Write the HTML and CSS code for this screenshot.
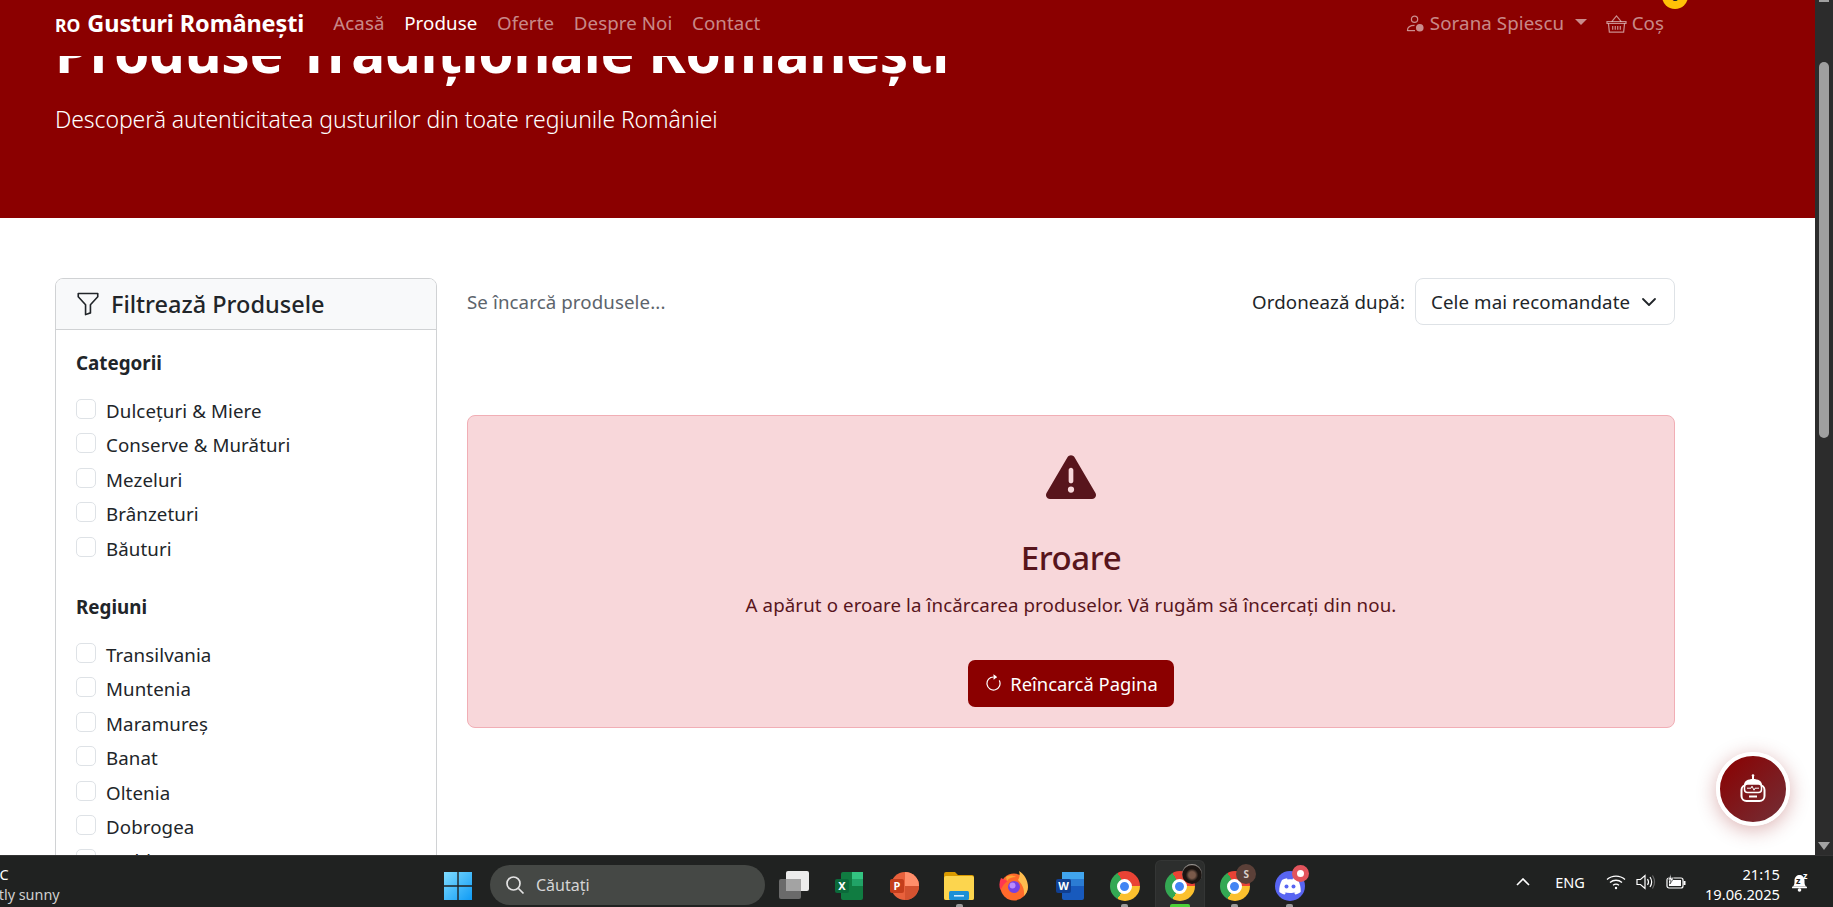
FILE: index.html
```html
<!DOCTYPE html>
<html lang="ro">
<head>
<meta charset="utf-8">
<title>Produse Tradiționale Românești</title>
<link rel="stylesheet" href="styles.css">
</head>
<body>
<div class="viewport">
  <div class="page">
    <nav class="navbar">
      <a class="brand"><span class="brand-ro">RO</span><span>Gusturi Românești</span></a>
      <a class="nav-link">Acasă</a>
      <a class="nav-link active">Produse</a>
      <a class="nav-link">Oferte</a>
      <a class="nav-link">Despre Noi</a>
      <a class="nav-link">Contact</a>
      <div class="nav-right">
        <a class="nav-link user">
          <svg class="nav-icon" viewBox="0 0 20 20" fill="none" stroke="currentColor" stroke-width="1.3"><circle cx="9" cy="5.5" r="3.3"/><path d="M1.500 17.500c0-3.500 3-5.500 7.500-5.500"/><path d="M1.500 17.500h8"/><circle cx="14.500" cy="14.500" r="4" fill="currentColor" stroke="none"/></svg>
          Sorana Spiescu<span class="caret"></span>
        </a>
        <a class="nav-link cart">
          <svg class="nav-icon basket" viewBox="0 0 22 20" fill="none" stroke="currentColor" stroke-width="1.300"><path d="M6 8l5-6 5 6"/><path d="M1 8h20v2H1z"/><path d="M2.500 10l1 9h15l1-9"/><path d="M7 12.500v4M9.700 12.500v4M12.300 12.500v4M15 12.500v4"/></svg>
          Coș
        </a>
      </div>
      <span class="cart-badge">0</span>
    </nav>

    <header class="hero">
      <div class="hero-clip"><h1 class="hero-title">Produse Tradiționale Românești</h1></div>
      <p class="hero-lead">Descoperă autenticitatea gusturilor din toate regiunile României</p>
    </header>

    <main class="content">
      <aside class="filters">
        <div class="filters-head">
          <svg class="funnel" viewBox="0 0 16 16" fill="currentColor"><path d="M1.5 1.5A.5.5 0 0 1 2 1h12a.5.5 0 0 1 .5.5v2a.5.5 0 0 1-.128.334L10 8.692V13.5a.5.5 0 0 1-.342.474l-3 1A.5.5 0 0 1 6 14.5V8.692L1.628 3.834A.5.5 0 0 1 1.5 3.5zm1 .5v1.308l4.372 4.858A.5.5 0 0 1 7 8.5v5.306l2-.666V8.5a.5.5 0 0 1 .128-.334L13.5 3.308V2z"/></svg>
          <h2>Filtrează Produsele</h2>
        </div>
        <div class="filters-body">
          <h3>Categorii</h3>
          <ul class="checks">
            <li><span class="box"></span>Dulcețuri &amp; Miere</li>
            <li><span class="box"></span>Conserve &amp; Murături</li>
            <li><span class="box"></span>Mezeluri</li>
            <li><span class="box"></span>Brânzeturi</li>
            <li><span class="box"></span>Băuturi</li>
          </ul>
          <h3 class="second">Regiuni</h3>
          <ul class="checks">
            <li><span class="box"></span>Transilvania</li>
            <li><span class="box"></span>Muntenia</li>
            <li><span class="box"></span>Maramureș</li>
            <li><span class="box"></span>Banat</li>
            <li><span class="box"></span>Oltenia</li>
            <li><span class="box"></span>Dobrogea</li>
            <li><span class="box"></span>Moldova</li>
          </ul>
        </div>
      </aside>

      <section class="results">
        <div class="toolbar">
          <span class="loading">Se încarcă produsele...</span>
          <div class="sort">
            <span>Ordonează după:</span>
            <div class="select">Cele mai recomandate
              <svg class="chev" viewBox="0 0 16 16" fill="none" stroke="currentColor" stroke-width="1.800" stroke-linecap="round" stroke-linejoin="round"><path d="M2 5l6 6 6-6"/></svg>
            </div>
          </div>
        </div>
        <div class="alert">
          <svg class="warn" viewBox="0 0 512 512" fill="currentColor"><path d="M256 32c14.2 0 27.3 7.5 34.5 19.8l216 368c7.3 12.4 7.3 27.7 .2 40.1S486.3 480 472 480H40c-14.3 0-27.6-7.7-34.7-20.1s-7-27.8 .2-40.1l216-368C228.7 39.5 241.8 32 256 32zm0 128c-13.3 0-24 10.7-24 24V296c0 13.3 10.7 24 24 24s24-10.7 24-24V184c0-13.3-10.7-24-24-24zm32 224a32 32 0 1 0 -64 0 32 32 0 1 0 64 0z"/></svg>
          <h4>Eroare</h4>
          <p>A apărut o eroare la încărcarea produselor. Vă rugăm să încercați din nou.</p>
          <button class="reload">
            <svg class="reload-icon" viewBox="0 0 16 16" fill="currentColor"><path d="M8 3a5 5 0 1 0 4.546 2.914.5.5 0 0 1 .908-.417A6 6 0 1 1 8 2z"/><path d="M8 4.466V.534a.25.25 0 0 1 .41-.192l2.36 1.966c.12.1.12.284 0 .384L8.41 4.658A.25.25 0 0 1 8 4.466"/></svg>
            Reîncarcă Pagina
          </button>
        </div>
      </section>
    </main>

    <button class="fab" aria-label="Asistent">
      <svg viewBox="0 0 32 32" fill="none" stroke="#fff" stroke-width="2"><path d="M16 2v4"/><circle cx="16" cy="2.500" r="1.300" fill="#fff" stroke="none"/><path d="M7 12c0-4 4-6 9-6s9 2 9 6v2H7z" fill="#fff" stroke="none"/><rect x="4.500" y="12" width="23" height="16" rx="5"/><rect x="7.500" y="11" width="17" height="8.500" rx="3" fill="#7d1a1f" stroke="#fff" stroke-width="1.500"/><path d="M10 15.200h4l1-2 2 4 1-2h4" stroke="#fff" stroke-width="1"/><path d="M12 23.500h8" stroke-width="2"/></svg>
    </button>
  </div>

  <div class="scrollbar">
    <span class="arrow-up"></span>
    <span class="thumb"></span>
    <span class="arrow-down"></span>
  </div>
</div>

<footer class="taskbar">
  <div class="weather">
    <span class="w-temp">27°C</span>
    <span class="w-desc">Partly sunny</span>
  </div>

  <div class="tb-center">
    <svg class="win" viewBox="0 0 30 30"><defs><linearGradient id="wg" x1="0" y1="0" x2="1" y2="1"><stop offset="0" stop-color="#7fdcff"/><stop offset="1" stop-color="#0f9bf5"/></linearGradient></defs><path fill="url(#wg)" d="M1 1h13.300v13.300H1zM15.700 1H29v13.300H15.700zM1 15.700h13.300V29H1zM15.700 15.700H29V29H15.700z"/></svg>
    <div class="search">
      <svg class="search-icon" viewBox="0 0 20 20" fill="none" stroke="#e3e3e3" stroke-width="1.700"><circle cx="8.500" cy="8.500" r="6.500"/><path d="M13.500 13.500l5 5"/></svg>
      <span>Căutați</span>
    </div>
    <div class="apps">
      <span class="app"><svg viewBox="0 0 30 30"><rect x="0" y="8" width="22" height="20" rx="2" fill="#6a6a6a"/><rect x="7" y="0" width="23" height="20" rx="2" fill="#ececec"/><rect x="7" y="8" width="15" height="12" fill="#a3a3a3"/></svg></span>
      <span class="app"><svg viewBox="0 0 30 30"><rect x="7" y="1" width="22" height="28" rx="2" fill="#107c41"/><rect x="18" y="1" width="11" height="7" fill="#33c481"/><rect x="18" y="8" width="11" height="7" fill="#21a366"/><rect x="18" y="15" width="11" height="7" fill="#107c41"/><rect x="1" y="8" width="14" height="14" rx="2" fill="#0b6a3a"/><text x="8" y="19" class="app-letter">X</text></svg></span>
      <span class="app"><svg viewBox="0 0 30 30"><circle cx="16" cy="15" r="14" fill="#e8613c"/><path d="M16 1a14 14 0 0 1 14 14H16z" fill="#ff8f6b"/><path d="M16 15h14a14 14 0 0 1-14 14z" fill="#d35230"/><rect x="1" y="8" width="14" height="14" rx="2" fill="#c43e1c"/><text x="8" y="19" class="app-letter">P</text></svg></span>
      <span class="app dot"><svg viewBox="0 0 30 30"><path d="M0 3a2 2 0 0 1 2-2h9l3 3h14a2 2 0 0 1 2 2v21a2 2 0 0 1-2 2H2a2 2 0 0 1-2-2z" fill="#d99a00"/><rect x="0" y="5" width="30" height="24" rx="2" fill="#fcd54e"/><rect x="5" y="20" width="20" height="9" rx="1.500" fill="#1b8fd6"/><rect x="10" y="24" width="10" height="1.600" fill="#cdeaff"/></svg></span>
      <span class="app"><svg viewBox="0 0 30 30"><circle cx="15" cy="16" r="13.500" fill="#ff6a2b"/><path d="M20 0c5 3 9 9 9 16 0 4-2 7-4 9 1-8-3-13-6-16 2-3 2-6 1-9z" fill="#ffbd4f"/><path d="M2 7c-2 4-2 9-.5 12 2-4 4-7 7-9z" fill="#ff3750"/><path d="M7 6c3-2 7-2 10 0-4 0-7 1-9 4z" fill="#ffa436"/><circle cx="15" cy="16" r="6" fill="#7542e5"/><circle cx="13.500" cy="14.500" r="3" fill="#b98bff"/></svg></span>
      <span class="app"><svg viewBox="0 0 30 30"><rect x="7" y="1" width="22" height="28" rx="2" fill="#185abd"/><rect x="7" y="1" width="22" height="7" fill="#41a5ee"/><rect x="7" y="8" width="22" height="7" fill="#2b7cd3"/><rect x="1" y="8" width="15" height="14" rx="2" fill="#103f91"/><text x="8.500" y="19" class="app-letter">W</text></svg></span>
      <span class="app dot"><span class="chrome"><span class="chrome-eye"></span></span></span>
      <span class="app active"><span class="chrome"><span class="chrome-eye"></span></span><span class="avatar photo"></span></span>
      <span class="app dot"><span class="chrome"><span class="chrome-eye"></span></span><span class="avatar letter">S</span></span>
      <span class="app dot"><svg viewBox="0 0 30 30"><circle cx="15" cy="15" r="15" fill="#5865f2"/><path d="M7 9c2-1 4-1.700 5-1.700l.6 1.200c1.600-.2 3.200-.2 4.800 0L18 7.300c1 0 3 .7 5 1.700 2 3.500 3 7.500 2.700 12-2 1.500-4 2.300-5.400 2.600l-1.200-1.900 2-1c-3.700 1.700-8.500 1.700-12.200 0l2 1-1.200 1.900c-1.400-.3-3.400-1.100-5.400-2.600C4 16.500 5 12.500 7 9z" fill="#fff"/><circle cx="11.500" cy="15.500" r="2" fill="#5865f2"/><circle cx="18.500" cy="15.500" r="2" fill="#5865f2"/></svg><span class="notify"></span></span>
    </div>
  </div>

  <div class="tray">
    <svg class="t-chev" viewBox="0 0 14 8" fill="none" stroke="#fff" stroke-width="1.600"><path d="M1 7l6-6 6 6"/></svg>
    <span class="lang">ENG</span>
    <svg class="t-wifi" viewBox="0 0 20 16" fill="none" stroke="#fff" stroke-width="1.300"><path d="M1 5.500c5-4.500 13-4.500 18 0M4 8.500c3.500-3 8.500-3 12 0M7 11.300c2-1.500 4-1.500 6 0"/><circle cx="10" cy="14" r="1.200" fill="#fff" stroke="none"/></svg>
    <svg class="t-vol" viewBox="0 0 20 16" fill="none" stroke="#fff" stroke-width="1.200"><path d="M1 5.500h3.500L9 1.500v13l-4.500-4H1z"/><path d="M11.500 5c1.200 1.800 1.200 4.200 0 6M14 3c2 3 2 7 0 10"/><path d="M16.500 1.500c2.500 4 2.500 9 0 13" stroke="#666"/></svg>
    <svg class="t-batt" viewBox="0 0 20 16"><rect x="1" y="4" width="16" height="10" rx="2" fill="none" stroke="#fff" stroke-width="1.200"/><rect x="3" y="6" width="12" height="6" fill="#fff"/><rect x="17.500" y="7" width="2" height="4" fill="#fff"/><path d="M5 0L2 6h3l-1 4 4-6H5z" fill="#fff" stroke="#202221" stroke-width=".6"/></svg>
    <div class="clock"><span>21:15</span><span>19.06.2025</span></div>
    <svg class="t-bell" viewBox="0 0 18 20"><path d="M2 14.500c1.500-1.500 1.500-3 1.500-6C3.500 5 6 3 8.500 3s5 2 5 5.500c0 3 0 4.500 1.500 6z" fill="#fff"/><rect x="1" y="14.500" width="15" height="1.800" rx=".9" fill="#fff"/><circle cx="8.500" cy="18" r="1.800" fill="#fff"/><text x="5" y="12" class="zz">z</text><text x="12" y="7" class="zz-w">z</text></svg>
  </div>
</footer>
</body>
</html>
```

FILE: styles.css
```css
* { box-sizing: border-box; }
html, body { margin: 0; height: 100%; }
body {
  display: flex;
  flex-direction: column;
  height: 100vh;
  overflow: hidden;
  font-family: "Noto Sans", "Open Sans", sans-serif;
  font-size: 18.7px;
  letter-spacing: .1px;
  color: #212529;
  background: #fff;
}
h1, h2, h3, h4, p, ul { margin: 0; padding: 0; }
ul { list-style: none; }

.viewport { flex: 1; display: flex; min-height: 0; }
.page { flex: 1; position: relative; overflow: hidden; min-width: 0; }

/* Navbar */
.navbar {
  height: 56px;
  background: #8b0000;
  display: flex;
  align-items: flex-start;
  padding: 9px 0 0 55px;
  position: relative;
  overflow: hidden;
}
.brand {
  display: flex;
  align-items: baseline;
  color: #fff;
  font-weight: 700;
  font-size: 23.5px;
  line-height: 28px;
  margin-right: 29px;
  letter-spacing: -.1px;
}
.brand-ro { font-size: 17.5px; margin-right: 7px; letter-spacing: 0; }
.nav-link {
  color: rgba(255,255,255,.55);
  line-height: 28px;
  margin-right: 19.6px;
  white-space: nowrap;
}
.nav-link.active { color: #fff; }
.nav-right { margin-left: auto; display: flex; margin-right: 151px; }
.nav-right .nav-link { display: flex; align-items: center; margin-right: 0; }
.user { gap: 5px; }
.cart { gap: 5px; margin-left: 18.5px; }
.nav-icon { width: 19px; height: 19px; }
.basket { width: 21px; }
.caret {
  width: 0; height: 0;
  border-left: 6px solid transparent;
  border-right: 6px solid transparent;
  border-top: 6px solid currentColor;
  margin-left: 6px;
  margin-top: -3px;
}
.cart-badge {
  position: absolute;
  left: 1662px;
  top: -17px;
  width: 26px;
  height: 26px;
  border-radius: 50%;
  background: #ffc107;
  color: #212529;
  font-size: 14px;
  font-weight: 700;
  line-height: 26px;
  text-align: center;
}

/* Hero */
.hero {
  height: 162px;
  background: #8b0000;
  padding-left: 55px;
  color: #fff;
}
.hero-clip {
  height: 35px;
  overflow: hidden;
  display: flex;
  align-items: flex-end;
}
.hero-title {
  font-size: 56.8px;
  font-weight: 700;
  line-height: 80px;
  flex: none;
  white-space: nowrap;
  letter-spacing: -.3px;
}
.hero-lead {
  font-size: 23px;
  font-weight: 300;
  line-height: 34px;
  margin-top: 11px;
  letter-spacing: -.09px;
}

/* Content */
.content {
  display: flex;
  align-items: flex-start;
  gap: 30px;
  padding: 60px 140px 0 55px;
}
.filters {
  flex: 0 0 382px;
  border: 1px solid #d0d2d4;
  border-radius: 8px;
  overflow: hidden;
}
.filters-head {
  height: 51px;
  background: #f8f9fa;
  border-bottom: 1px solid #d0d2d4;
  display: flex;
  align-items: center;
  padding-left: 19px;
  gap: 10px;
}
.funnel { width: 26px; height: 26px; }
.filters-head h2 { font-size: 23.5px; font-weight: 500; letter-spacing: 0; }
.filters-body { padding: 20px 20px 0; }
.filters-body h3 { font-size: 18.8px; font-weight: 700; line-height: 26px; letter-spacing: 0; margin-bottom: 23px; }
.filters-body h3.second { margin-top: 23px; margin-bottom: 23px; }
.checks li {
  height: 34.4px;
  display: flex;
  align-items: flex-start;
  line-height: 23px;
}
.box {
  width: 20px;
  height: 20px;
  border: 1px solid #dee2e6;
  border-radius: 5px;
  margin-right: 10px;
  flex: none;
}

.results { flex: 1; min-width: 0; }
.toolbar { display: flex; justify-content: space-between; align-items: center; height: 47px; }
.loading { color: #5c646c; }
.sort { display: flex; align-items: center; gap: 10px; }
.select {
  width: 260px;
  height: 47px;
  border: 1px solid #dee2e6;
  border-radius: 8px;
  padding-left: 15px;
  display: flex;
  align-items: center;
  position: relative;
}
.chev { position: absolute; right: 17px; top: 14.5px; width: 16px; height: 16px; }

.alert {
  margin-top: 90px;
  height: 313px;
  background: #f8d7da;
  border: 1px solid #f1aeb5;
  border-radius: 8px;
  color: #58151c;
  display: flex;
  flex-direction: column;
  align-items: center;
  padding-top: 36px;
}
.warn { width: 50px; height: 50px; }
.alert h4 { font-size: 33px; font-weight: 500; line-height: 44px; margin-top: 34px; letter-spacing: -.4px; }
.alert p { line-height: 26px; margin-top: 12px; }
.reload {
  margin-top: 41.5px;
  width: 206px;
  height: 47px;
  background: #8b0000;
  color: #fff;
  border: 0;
  border-radius: 7px;
  font: inherit;
  font-size: 18.4px;
  letter-spacing: 0;
  display: flex;
  align-items: center;
  justify-content: center;
  gap: 7px;
}
.reload-icon { width: 19px; height: 19px; }

.fab {
  position: absolute;
  right: 25px;
  bottom: 29px;
  width: 74px;
  height: 74px;
  border-radius: 50%;
  border: 4px solid #fff;
  background: linear-gradient(135deg, #8b0000, #722f37);
  box-shadow: 0 4px 20px rgba(139,0,0,.3);
  padding: 0;
  display: flex;
  align-items: center;
  justify-content: center;
}
.fab svg { width: 32px; height: 32px; }

/* Scrollbar */
.scrollbar {
  flex: 0 0 18px;
  background: #2c2c2c;
  display: flex;
  flex-direction: column;
  align-items: center;
  position: relative;
}
.thumb {
  width: 10px;
  height: 376px;
  margin-top: 62px;
  background: #9f9f9f;
  border-radius: 5px;
}
.arrow-up { position: absolute; top: 0; left: 4px; width: 10px; height: 2px; background: #a0a0a0; }
.arrow-down {
  position: absolute;
  bottom: 5px;
  left: 3px;
  border-left: 6px solid transparent;
  border-right: 6px solid transparent;
  border-top: 8px solid #a3a3a3;
}

/* Taskbar */
.taskbar {
  flex: 0 0 52px;
  background: #202221;
  border-top: 1px solid #333;
  display: flex;
  position: relative;
  color: #fff;
  overflow: hidden;
  letter-spacing: 0;
}
.weather {
  width: 62px;
  overflow: hidden;
  display: flex;
  flex-direction: column;
  padding-top: 9px;
  line-height: 20px;
}
.w-temp { margin-left: -23px; font-size: 14.4px; white-space: nowrap; }
.w-desc { margin-left: -24px; font-size: 14.4px; color: #d0d0d0; white-space: nowrap; }

.tb-center { display: flex; align-items: flex-start; margin-left: 381px; padding-top: 9px; }
.win { width: 30px; height: 30px; margin-top: 6px; }
.search {
  width: 275px;
  height: 40px;
  margin-left: 17px;
  background: #454845;
  border-radius: 20px;
  display: flex;
  align-items: center;
  padding-left: 15px;
  gap: 11px;
  font-size: 16px;
  color: #d5d5d5;
}
.search-icon { width: 20px; height: 20px; }
.apps { display: flex; margin-left: 1.5px; }
.app {
  position: relative;
  width: 55.1px;
  height: 42px;
  display: flex;
  justify-content: center;
  padding-top: 6px;
}
.app svg { width: 30px; height: 30px; }
.app-letter { font: 700 11px "Noto Sans", sans-serif; fill: #fff; text-anchor: middle; }
.app.dot::after {
  content: "";
  position: absolute;
  bottom: 0;
  left: 24px;
  width: 7px;
  height: 3px;
  border-radius: 2px 2px 0 0;
  background: #9a9a9a;
}
.app.active {
  background: #2c2e2d;
  border-radius: 6px 6px 0 0;
  width: 50px;
  height: 47px;
  margin: -5px 2.6px 0;
  padding-top: 10px;
  border: 1px solid #343635;
  border-bottom: 0;
}
.app.active::after {
  content: "";
  position: absolute;
  bottom: 0;
  left: 14px;
  width: 20px;
  height: 3px;
  border-radius: 2px 2px 0 0;
  background: #4cd137;
}
.chrome {
  width: 30px;
  height: 30px;
  border-radius: 50%;
  background: conic-gradient(#ea4335 0 90deg, #fbc02d 90deg 210deg, #34a853 210deg 330deg, #ea4335 330deg);
  display: flex;
  align-items: center;
  justify-content: center;
}
.chrome-eye {
  width: 15px;
  height: 15px;
  border-radius: 50%;
  background: #4285f4;
  border: 3px solid #fff;
}
.avatar {
  position: absolute;
  width: 20px;
  height: 20px;
  border-radius: 50%;
  font-size: 10px;
  font-weight: 700;
  text-align: center;
  line-height: 20px;
  color: #d8cfc9;
}
.avatar.photo { top: 3px; left: 26px; background: radial-gradient(circle at 50% 55%, #7a5a4a 0 22%, #1b1512 42% 62%, #cfc9c4 74%); }
.avatar.letter { top: -1px; left: 29px; background: #5b4038; }
.notify {
  position: absolute;
  top: 0;
  left: 30px;
  width: 17px;
  height: 17px;
  border-radius: 50%;
  background: #fff;
  border: 5px solid #e2545c;
}

.tray {
  position: absolute;
  right: 0;
  top: 0;
  height: 100%;
  display: flex;
  align-items: center;
  padding-right: 24px;
}
.t-chev { width: 14px; height: 8px; margin-right: 25px; }
.lang { font-size: 14.5px; margin-right: 21px; }
.t-wifi { width: 20px; height: 16px; margin-right: 10px; }
.t-vol { width: 20px; height: 16px; margin-right: 10px; }
.t-batt { width: 20px; height: 16px; margin-right: 19px; }
.clock {
  display: flex;
  flex-direction: column;
  align-items: flex-end;
  font-size: 14.7px;
  line-height: 20px;
  margin-right: 11px;
  margin-top: 4px;
}
.t-bell { width: 18px; height: 20px; }
.zz { font: 700 9px "Noto Sans", sans-serif; fill: #202221; }
.zz-w { font: 700 9px "Noto Sans", sans-serif; fill: #fff; }
```
